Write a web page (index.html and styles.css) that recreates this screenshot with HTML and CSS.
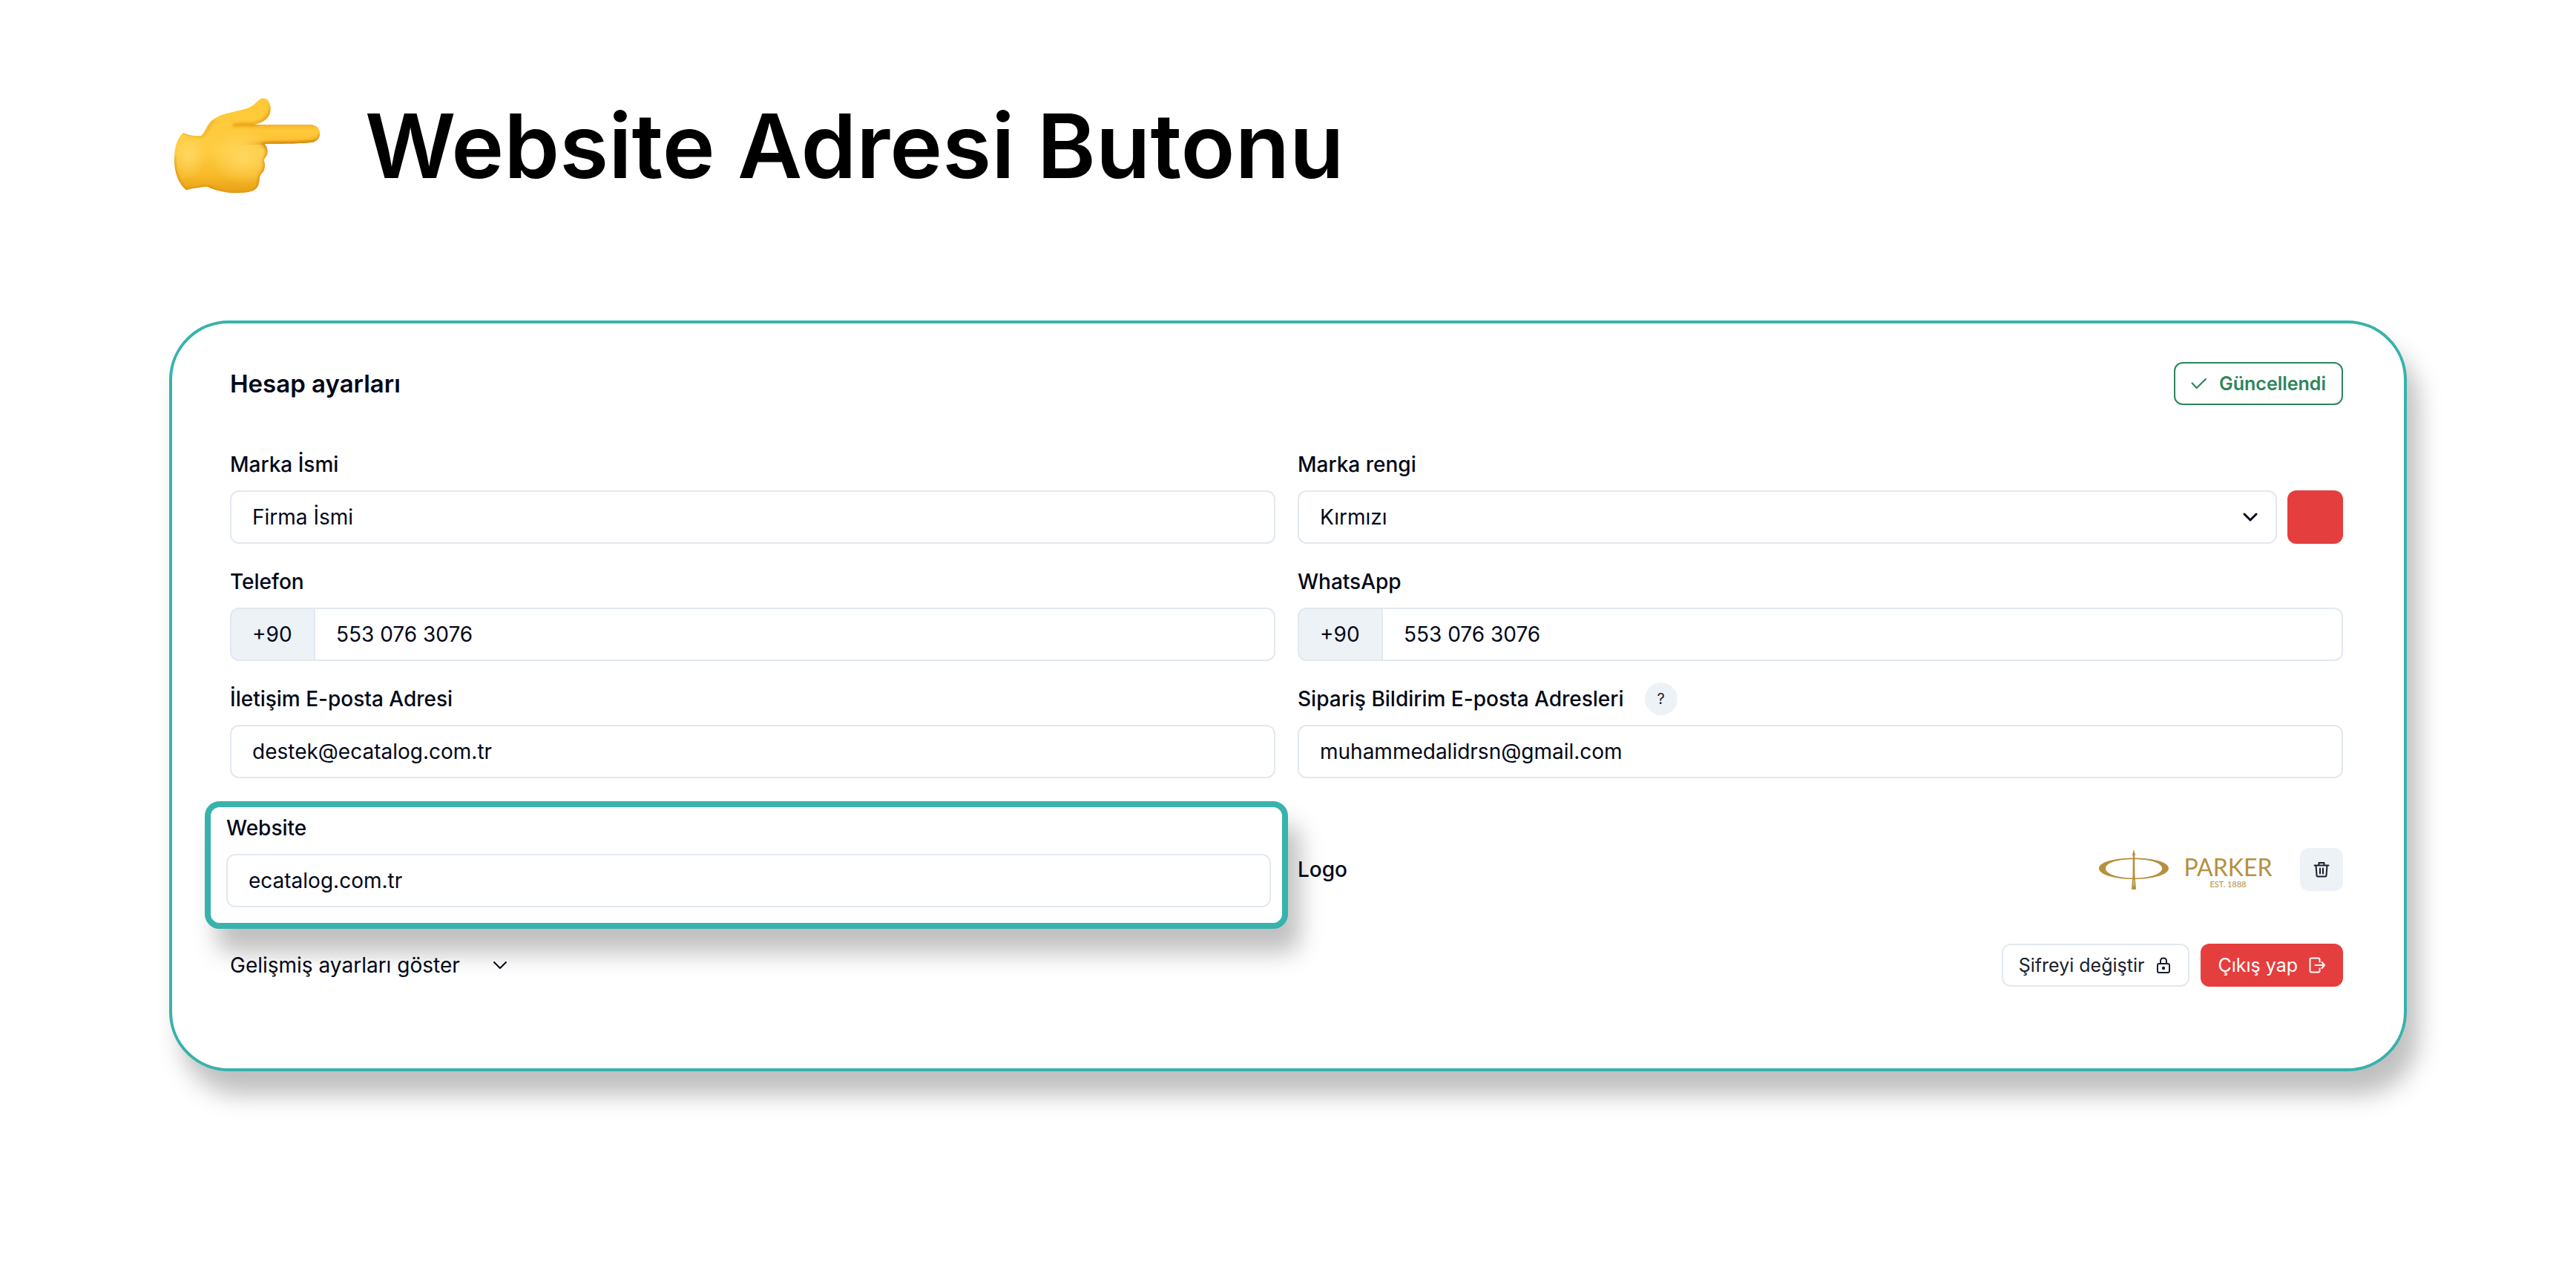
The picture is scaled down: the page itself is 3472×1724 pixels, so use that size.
FILE: index.html
```html
<!DOCTYPE html>
<html lang="tr">
<head>
<meta charset="utf-8">
<meta name="viewport" content="width=device-width, initial-scale=1">
<title>Website Adresi Butonu</title>
<link rel="stylesheet" href="styles.css">
</head>
<body>
<main class="page">
  <header class="page-header">
    <svg class="hand" viewBox="30 28 206 136" aria-hidden="true">
      <defs>
        <linearGradient id="palm" x1="0" y1="0" x2="0" y2="1">
          <stop offset="0" stop-color="#ffc835"/>
          <stop offset=".55" stop-color="#ffcc42"/>
          <stop offset=".8" stop-color="#f7b929"/>
          <stop offset="1" stop-color="#e39c12"/>
        </linearGradient>
        <linearGradient id="finger" x1="0" y1="0" x2="0" y2="1">
          <stop offset="0" stop-color="#f5b426"/>
          <stop offset=".3" stop-color="#ffca3c"/>
          <stop offset=".75" stop-color="#fdc233"/>
          <stop offset="1" stop-color="#dd9012"/>
        </linearGradient>
        <linearGradient id="finger-mask-fill" x1="0" y1="0" x2="1" y2="0">
          <stop offset="0" stop-color="#000"/>
          <stop offset=".3" stop-color="#fff"/>
        </linearGradient>
        <mask id="finger-mask" maskUnits="userSpaceOnUse" x="125" y="68" width="110" height="27">
          <rect x="125" y="68" width="110" height="27" fill="url(#finger-mask-fill)"/>
        </mask>
        <radialGradient id="glow">
          <stop offset="0" stop-color="#ffd75f"/>
          <stop offset="1" stop-color="#ffd75f" stop-opacity="0"/>
        </radialGradient>
        <filter id="soft" x="-20%" y="-20%" width="140%" height="140%"><feGaussianBlur stdDeviation="2"/></filter>
        <clipPath id="hand-shape">
          <path d="M47 79C54 82 63 84 71 83C77 78 78 70 84 64C91 57 100 54 110 52C120 49 128 48 133 46C142 43 146 37 150 34C153 32 158 32 161 35C165 40 165.500 47 163.500 54C160 62 152 66 142 68H218C226 68 231 73 231 80C231 87 226 91.500 219 92C198 94 176 93.500 156.500 94C161 99 162 106 158.500 111C157.500 113 156 114 155.500 116C158 121 157 128 154.500 132C152 134 150.500 136 150 139C149.500 147 148 154 141 157C132 161 108 161 97 157.500C90 156 84 154 79.500 151.500C70 152 60 154 51 156C41 148 35 133 35 116C34.500 101 38 87 47 79Z"/>
        </clipPath>
      </defs>
      <g clip-path="url(#hand-shape)">
        <rect x="30" y="28" width="206" height="136" fill="url(#palm)"/>
        <rect x="125" y="68" width="110" height="27" fill="url(#finger)" mask="url(#finger-mask)"/>
        <ellipse cx="128" cy="112" rx="46" ry="36" fill="url(#glow)"/>
        <ellipse cx="54" cy="108" rx="24" ry="34" fill="url(#glow)"/>
        <path d="M114 69C128 67.500 136 67.500 142 68C156 65 163 58 167 42" fill="none" stroke="#d98c0e" stroke-width="3" filter="url(#soft)"/>
        <path d="M47 78C55 82 63 84 72 83C80 77 82 69 88 61" fill="none" stroke="#e09a18" stroke-width="2" filter="url(#soft)"/>
        <path d="M233 80C232 91 226 94 156 95C166 104 159 112 157 116C161 128 153 134 151 139C150 156 148 165 112 163C96 162 84 155 80 153L50 158C39 148 33 133 33 112" fill="none" stroke="#cf7d0a" stroke-width="4" filter="url(#soft)"/>
      </g>
    </svg>
    <h1 class="page-title">Website Adresi Butonu</h1>
  </header>

  <form class="card">
    <div class="card-header">
      <h2 class="card-title">Hesap ayarları</h2>
      <button type="button" class="btn btn-success">
        <svg class="icon-check" viewBox="0 0 20 20" aria-hidden="true"><path d="M1.500 9.500 7 15.500 18 4.500"/></svg>
        Güncellendi
      </button>
    </div>

    <div class="fields">
      <div class="field">
        <label class="label" for="brand">Marka İsmi</label>
        <input class="input" id="brand" type="text" value="Firma İsmi">
      </div>
      <div class="field">
        <label class="label" for="color">Marka rengi</label>
        <div class="color-row">
          <div class="select">
            <select class="input" id="color"><option>Kırmızı</option></select>
            <svg class="chevron chevron-bold" viewBox="0 0 20 14" aria-hidden="true"><path d="M2 3 10 11 18 3"/></svg>
          </div>
          <span class="swatch"></span>
        </div>
      </div>

      <div class="field">
        <label class="label" for="phone">Telefon</label>
        <div class="phone">
          <span class="prefix">+90</span>
          <input class="input" id="phone" type="tel" value="553 076 3076">
        </div>
      </div>
      <div class="field">
        <label class="label" for="whatsapp">WhatsApp</label>
        <div class="phone">
          <span class="prefix">+90</span>
          <input class="input" id="whatsapp" type="tel" value="553 076 3076">
        </div>
      </div>

      <div class="field">
        <label class="label" for="contact">İletişim E-posta Adresi</label>
        <input class="input" id="contact" type="email" value="destek@ecatalog.com.tr">
      </div>
      <div class="field">
        <div class="label-row">
          <label class="label" for="orders">Sipariş Bildirim E-posta Adresleri</label>
          <button type="button" class="help">?</button>
        </div>
        <input class="input" id="orders" type="email" value="muhammedalidrsn@gmail.com">
      </div>

      <div class="field field-highlight">
        <label class="label" for="website">Website</label>
        <input class="input" id="website" type="text" value="ecatalog.com.tr">
      </div>
      <div class="logo-row">
        <span class="label">Logo</span>
        <div class="logo-actions">
          <svg class="brand-logo" viewBox="0 0 244 56" role="img" aria-label="Parker">
            <g fill="#b5903f">
              <path fill-rule="evenodd" d="M48 12.500C74 12.500 95 18 95 26.500S74 41 48 41 1 35 1 26.500 22 12.500 48 12.500ZM48 14.200C26 14.200 10 19 10 26.500S26 39.500 48 39.500 86 34 86 26.500 70 14.200 48 14.200Z"/>
              <path d="M48 1 50 8 49.200 10 49.500 36 51 55H45L46.500 36 46.800 10 46 8Z"/>
            </g>
            <path d="M47 42 49 44 47 46 49 48 47 50" fill="none" stroke="#fff" stroke-width="1" opacity=".6"/>
            <text class="brand-name" x="175" y="37" text-anchor="middle">PARKER</text>
            <text class="brand-year" x="175" y="52" text-anchor="middle">EST. 1888</text>
          </svg>
          <button type="button" class="btn btn-icon" aria-label="Logoyu sil">
            <svg class="icon" viewBox="0 0 24 24" aria-hidden="true"><path d="M2.500 6.500H21.500M8.500 6.500V3H15.500V6.500M4.500 6.500 5.500 20Q5.700 21.500 7 21.500H17Q18.300 21.500 18.500 20L19.500 6.500M10 10.500V17.500M14 10.500V17.500"/></svg>
          </button>
        </div>
      </div>
    </div>

    <div class="card-footer">
      <button type="button" class="toggle">
        Gelişmiş ayarları göster
        <svg class="chevron" viewBox="0 0 20 14" aria-hidden="true"><path d="M2 3 10 11 18 3"/></svg>
      </button>
      <div class="actions">
        <button type="button" class="btn btn-outline">
          Şifreyi değiştir
          <svg class="icon" viewBox="0 0 24 24" aria-hidden="true"><rect x="4" y="10" width="16" height="12" rx="2"/><path d="M8 10V6.500Q8 2.500 12 2.500T16 6.500V10"/><circle cx="12" cy="16" r="1.200"/></svg>
        </button>
        <button type="button" class="btn btn-danger">
          Çıkış yap
          <svg class="icon" viewBox="0 0 24 24" aria-hidden="true"><path d="M15.500 7.500V4.500Q15.500 2.500 13.500 2.500H4.500Q2.500 2.500 2.500 4.500V19.500Q2.500 21.500 4.500 21.500H13.500Q15.500 21.500 15.500 19.500V16.500M9.500 12H22M18.500 8 22 12 18.500 16"/></svg>
        </button>
      </div>
    </div>
  </form>
</main>
</body>
</html>
```
FILE: styles.css
```css
* { box-sizing: border-box; }

body {
  margin: 0;
  background: #fff;
  color: #020817;
  font-family: Inter, "Liberation Sans", sans-serif;
  font-size: 28px;
  line-height: 40px;
}

button, input, select { font: inherit; color: inherit; margin: 0; }
h1, h2 { margin: 0; }

.page { padding: 116px 228px 280px; }

.page-header {
  display: flex;
  align-items: center;
  gap: 56px;
  height: 160px;
  margin-bottom: 156px;
}
.hand { width: 206px; height: 136px; margin-left: 2px; }
.page-title {
  padding-top: 2px;
  color: #000;
  font-size: 120px;
  line-height: 160px;
  font-weight: 600;
}

.card {
  padding: 52px 82px 110px 78px;
  border: 4px solid #38b2ac;
  border-radius: 80px;
  background: #fff;
  box-shadow: 16px 32px 32px rgba(0, 0, 0, 0.25);
}
.card-header {
  display: flex;
  align-items: center;
  justify-content: space-between;
  margin-bottom: 60px;
}
.card-title { font-size: 33px; font-weight: 600; }

.fields {
  display: grid;
  grid-template-columns: 1fr 1fr;
  gap: 31px 30px;
}
.field { display: flex; flex-direction: column; gap: 15px; min-width: 0; }
.label { font-weight: 500; }
.label-row { display: flex; align-items: center; gap: 28px; height: 40px; }

.input {
  width: 100%;
  height: 72px;
  padding: 0 28px;
  border: 2px solid #e2e8f0;
  border-radius: 12px;
  background: #fff;
  outline: none;
}

.color-row { display: flex; gap: 14px; }
.select { display: grid; flex: 1; align-items: center; }
.select .input { grid-area: 1 / 1; appearance: none; }
.select .chevron { grid-area: 1 / 1; justify-self: end; margin-right: 26px; pointer-events: none; }
.swatch { width: 75px; height: 72px; border-radius: 12px; background: #e53e3e; }

.phone { display: flex; }
.prefix {
  flex: none;
  width: 115px;
  padding: 14px 28px;
  border: 2px solid #e2e8f0;
  border-radius: 12px 0 0 12px;
  background: #edf2f7;
}
.phone .input { border-left: 0; border-radius: 0 12px 12px 0; }

.help {
  width: 44px;
  height: 44px;
  padding: 0;
  border: 0;
  border-radius: 50%;
  background: #edf2f7;
  color: #1a202c;
  font-size: 20px;
  line-height: 44px;
}

.field-highlight {
  margin: 0 -17px 0 -34px;
  padding: 8px 15px 21px 21px;
  border: 8px solid #38b2ac;
  border-radius: 20px;
  background: #fff;
  box-shadow: 16px 32px 32px rgba(0, 0, 0, 0.25);
}

.logo-row {
  display: flex;
  align-items: center;
  justify-content: space-between;
  padding-top: 12px;
}
.logo-actions { display: flex; align-items: center; gap: 28px; }
.brand-logo { width: 244px; height: 56px; }
.brand-name { fill: #b5903f; font: 400 32px Lato, sans-serif; }
.brand-year { fill: #b5903f; font: 400 11px Lato, sans-serif; }

.card-footer {
  display: flex;
  align-items: center;
  justify-content: space-between;
  margin-top: 20px;
}
.actions { display: flex; gap: 15px; }
.toggle {
  display: flex;
  align-items: center;
  gap: 44px;
  padding: 0;
  border: 0;
  background: none;
}

.btn {
  display: flex;
  align-items: center;
  height: 58px;
  padding: 0 21px;
  border: 2px solid transparent;
  border-radius: 12px;
  font-size: 25px;
  line-height: 32px;
}
.btn-success {
  gap: 16px;
  border-color: #2f855a;
  background: #fff;
  color: #2f855a;
  font-weight: 600;
}
.btn-icon { justify-content: center; width: 58px; padding: 0; background: #edf2f7; color: #1a202c; }
.btn-outline { gap: 14px; border-color: #e2e8f0; background: #fff; color: #1a202c; }
.btn-danger { gap: 14px; background: #e53e3e; color: #fff; }

.icon, .icon-check, .chevron {
  flex: none;
  fill: none;
  stroke: currentColor;
  stroke-width: 2;
  stroke-linecap: round;
  stroke-linejoin: round;
}
.icon { width: 24px; height: 24px; }
.icon-check { width: 22px; height: 22px; }
.chevron { width: 20px; height: 14px; }
.chevron-bold { stroke-width: 3; }
```
